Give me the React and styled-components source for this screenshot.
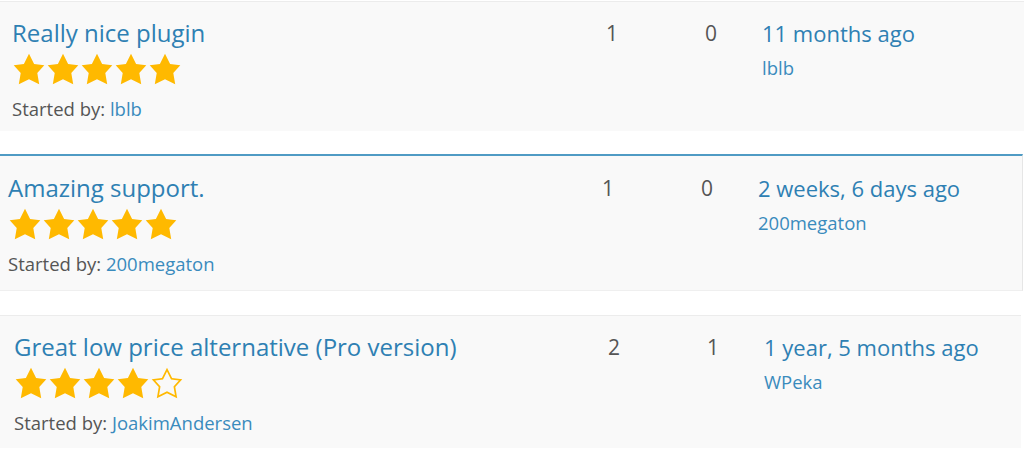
import React from "react";
import styled, { createGlobalStyle } from "styled-components";

const Global = createGlobalStyle`
  html, body { margin: 0; padding: 0; background: #ffffff; }
  body { font-family: "Open Sans", "Noto Sans", sans-serif; -webkit-font-smoothing: antialiased; }
`;

const List = styled.div`
  display: flex;
  flex-direction: column;
  width: 1024px;
  padding-top: 1px;
`;

const Row = styled.div`
  display: grid;
  grid-template-columns: 594px 99px 57px 1fr;
  background: #f9f9f9;
  margin-top: ${(p) => p.$gap}px;
  margin-right: ${(p) => p.$right}px;
  padding: ${(p) => p.$top}px 0 ${(p) => p.$bottom}px ${(p) => p.$left}px;
  border-top: ${(p) => (p.$active ? "2px solid #4f9bc4" : "1px solid #ececec")};
  border-right: ${(p) => (p.$active ? "1px solid #e6e6e6" : "none")};
  border-bottom: ${(p) => (p.$active ? "1px solid #efefef" : "none")};
`;

const Main = styled.div`
  display: flex;
  flex-direction: column;
  align-items: flex-start;
`;

const Title = styled.a`
  font-size: 24px;
  line-height: 30px;
  color: #2e80b3;
  text-decoration: none;
  white-space: nowrap;
`;

const Stars = styled.div`
  display: flex;
  margin-top: 4px;
`;

const StarSvg = styled.svg`
  width: 34px;
  height: 34px;
  display: block;
  fill: #ffb900;
`;

const Meta = styled.div`
  margin-top: 12px;
  font-size: 18.5px;
  line-height: 22px;
  color: #555555;
  white-space: nowrap;
`;

const UserLink = styled.a`
  color: #3a8bbd;
  text-decoration: none;
`;

const Count = styled.div`
  font-size: 21px;
  line-height: 30px;
  color: #555555;
`;

const Fresh = styled.div`
  display: flex;
  flex-direction: column;
  align-items: flex-start;
`;

const DateLink = styled.a`
  font-size: 22px;
  line-height: 30px;
  color: #2e80b3;
  text-decoration: none;
  white-space: nowrap;
`;

const Author = styled.a`
  margin-top: 9px;
  font-size: 18.5px;
  line-height: 22px;
  color: #3a8bbd;
  text-decoration: none;
`;

const FILLED = "M10 1l3 6 6 .75-4.12 4.62L16 19l-6-3-6 3 1.13-6.63L1 7.75 7 7z";
const EMPTY =
  "M10 1L7 7l-6 .75 4.13 4.62L4 19l6-3 6 3-1.12-6.63L19 7.75 13 7zm0 2.24l2.34 4.69 4.65.58-3.18 3.56.87 5.15L10 14.88l-4.68 2.34.87-5.15-3.18-3.56 4.65-.58z";

const Star = ({ filled }) => (
  <StarSvg viewBox="0 0 20 20">
    <path d={filled ? FILLED : EMPTY} />
  </StarSvg>
);

const rows = [
  {
    title: "Really nice plugin",
    rating: 5,
    by: "lblb",
    voices: 1,
    replies: 0,
    when: "11 months ago",
    last: "lblb",
    gap: 0,
    left: 12,
    right: 0,
    top: 16,
    bottom: 11,
  },
  {
    title: "Amazing support.",
    rating: 5,
    by: "200megaton",
    voices: 1,
    replies: 0,
    when: "2 weeks, 6 days ago",
    last: "200megaton",
    gap: 23,
    left: 8,
    right: 1,
    top: 17,
    bottom: 15,
    active: true,
  },
  {
    title: "Great low price alternative (Pro version)",
    rating: 4,
    by: "JoakimAndersen",
    voices: 2,
    replies: 1,
    when: "1 year, 5 months ago",
    last: "WPeka",
    gap: 24,
    left: 14,
    right: 3,
    top: 16,
    bottom: 14,
  },
];

export default function App() {
  return (
    <>
      <Global />
      <List>
        {rows.map((r) => (
          <Row
            key={r.title}
            $gap={r.gap}
            $left={r.left}
            $right={r.right}
            $top={r.top}
            $bottom={r.bottom}
            $active={r.active}
          >
            <Main>
              <Title href="#">{r.title}</Title>
              <Stars>
                {[1, 2, 3, 4, 5].map((i) => (
                  <Star key={i} filled={i <= r.rating} />
                ))}
              </Stars>
              <Meta>
                Started by: <UserLink href="#">{r.by}</UserLink>
              </Meta>
            </Main>
            <Count>{r.voices}</Count>
            <Count>{r.replies}</Count>
            <Fresh>
              <DateLink href="#">{r.when}</DateLink>
              <Author href="#">{r.last}</Author>
            </Fresh>
          </Row>
        ))}
      </List>
    </>
  );
}
